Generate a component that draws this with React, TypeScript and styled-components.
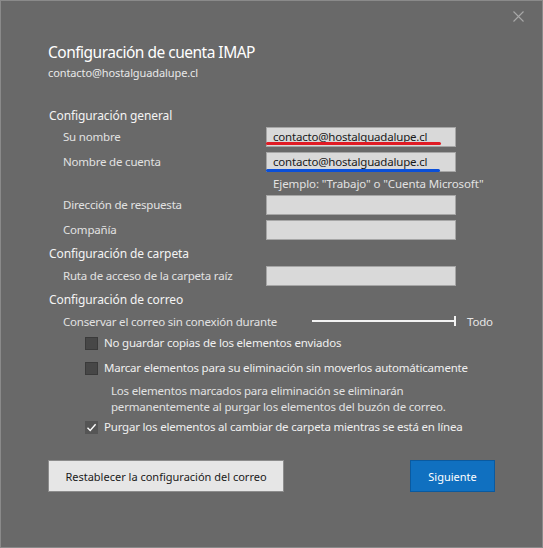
import React from "react";
import styled, { createGlobalStyle } from "styled-components";

const Global = createGlobalStyle`
  html, body { margin: 0; padding: 0; background: #696969; }
  * { box-sizing: border-box; }
`;

const FONT = `"Noto Sans", "Open Sans", "Liberation Sans", sans-serif`;

const Window = styled.div`
  width: 543px;
  height: 548px;
  background: #696969;
  border: 1px solid #8a8a8a;
  font-family: ${FONT};
  color: #e6e6e6;
  display: flex;
  flex-direction: column;
  overflow: hidden;
`;

const TopBar = styled.div`
  height: 32px;
  display: flex;
  justify-content: flex-end;
  align-items: flex-start;
  padding: 9px 18px 0 0;
`;

const CloseBtn = styled.button`
  width: 12px;
  height: 12px;
  padding: 0;
  border: 0;
  background: transparent;
  display: flex;
  align-items: center;
  justify-content: center;
`;

const Content = styled.div`
  padding-left: 47px;
  display: flex;
  flex-direction: column;
`;

const Title = styled.h1`
  margin: 7px 0 0 0;
  font-weight: 400;
  font-size: 15.5px;
  line-height: 24px;
  color: #ffffff;
  letter-spacing: -0.5px;
`;

const Subtitle = styled.div`
  margin-top: 1px;
  font-size: 11px;
  line-height: 16px;
  color: #e8e8e8;
  letter-spacing: -0.1px;
`;

const SectionHeader = styled.div<{ $mt: number }>`
  margin-top: ${(p) => p.$mt}px;
  font-size: 12px;
  line-height: 16px;
  color: #f4f4f4;
  padding-left: 1px;
  letter-spacing: -0.1px;
`;

const FieldRow = styled.div<{ $mt: number }>`
  margin-top: ${(p) => p.$mt}px;
  display: grid;
  grid-template-columns: 203px 190px;
  align-items: center;
  height: 20px;
  padding-left: 15px;
`;

const Label = styled.label`
  font-size: 11.5px;
  letter-spacing: -0.2px;
  color: #e2e2e2;
  white-space: nowrap;
  padding-bottom: 2px;
`;

const InputWrap = styled.div`
  position: relative;
  height: 20px;
`;

const TextInput = styled.div`
  width: 190px;
  height: 20px;
  background: #d9d9d9;
  border: 1px solid #a6a6a6;
  font-size: 11.5px;
  letter-spacing: -0.2px;
  line-height: 17px;
  color: #1a1a1a;
  padding-left: 6px;
  white-space: nowrap;
  overflow: hidden;
`;

const Underline = styled.div<{ $color: string; $w: number; $bottom: number }>`
  position: absolute;
  left: 0;
  bottom: ${(p) => p.$bottom}px;
  width: ${(p) => p.$w}px;
  height: 3px;
  border-radius: 2px;
  background: ${(p) => p.$color};
`;

const Hint = styled.div`
  margin-top: 4px;
  padding-left: 225px;
  font-size: 11.5px;
  letter-spacing: -0.1px;
  line-height: 16px;
  color: #e2e2e2;
  white-space: nowrap;
`;

const SliderRow = styled.div`
  margin-top: 5px;
  height: 16px;
  display: flex;
  align-items: center;
  padding-left: 15px;
`;

const SliderLabel = styled.span`
  width: 249px;
  font-size: 11.5px;
  letter-spacing: -0.2px;
  color: #e2e2e2;
  white-space: nowrap;
`;

const Track = styled.div`
  position: relative;
  width: 144px;
  height: 2px;
  background: #f2f2f2;
  &::after {
    content: "";
    position: absolute;
    right: 0;
    top: -4px;
    width: 2px;
    height: 10px;
    background: #f2f2f2;
  }
`;

const SliderValue = styled.span`
  margin-left: 11px;
  font-size: 11.5px;
  letter-spacing: -0.2px;
  color: #e6e6e6;
`;

const CheckRow = styled.div<{ $mt: number }>`
  margin-top: ${(p) => p.$mt}px;
  height: 20px;
  display: flex;
  align-items: center;
  padding-left: 37px;
  gap: 6px;
`;

const Box = styled.span<{ $checked?: boolean }>`
  width: 13px;
  height: 13px;
  flex: none;
  background: ${(p) => (p.$checked ? "#555555" : "#474747")};
  border: 1px solid ${(p) => (p.$checked ? "#555555" : "#3a3a3a")};
  display: flex;
  align-items: center;
  justify-content: center;
`;

const CheckText = styled.span`
  font-size: 11.5px;
  letter-spacing: -0.2px;
  color: #f0f0f0;
  white-space: nowrap;
  padding-bottom: 1px;
`;

const Note = styled.div`
  margin-top: 5px;
  padding-left: 63px;
  font-size: 11.5px;
  letter-spacing: -0.2px;
  line-height: 16px;
  color: #e2e2e2;
`;

const Buttons = styled.div`
  margin-top: 23px;
  display: flex;
  justify-content: space-between;
  padding-right: 47px;
`;

const SecondaryButton = styled.button`
  width: 236px;
  height: 32px;
  background: #e6e6e6;
  border: 1px solid #8c8c8c;
  font-family: ${FONT};
  font-size: 11px;
  color: #1a1a1a;
  padding: 0;
`;

const PrimaryButton = styled.button`
  width: 85px;
  height: 32px;
  background: #1070c0;
  border: 1px solid #0a5aa0;
  font-family: ${FONT};
  font-size: 11px;
  color: #ffffff;
  padding: 0;
`;

function Field({
  label,
  value,
  mt,
  underline,
}: {
  label: string;
  value?: string;
  mt: number;
  underline?: { color: string; w: number; bottom: number };
}) {
  return (
    <FieldRow $mt={mt}>
      <Label>{label}</Label>
      <InputWrap>
        <TextInput>{value}</TextInput>
        {underline && (
          <Underline $color={underline.color} $w={underline.w} $bottom={underline.bottom} />
        )}
      </InputWrap>
    </FieldRow>
  );
}

const Check = () => (
  <svg width="11" height="11" viewBox="0 0 11 11">
    <path d="M1.5 5.8 L4.2 8.4 L9.6 2.2" fill="none" stroke="#ffffff" strokeWidth="1.4" />
  </svg>
);

export default function App() {
  return (
    <>
      <Global />
      <Window>
        <TopBar>
          <CloseBtn aria-label="Cerrar">
            <svg width="11" height="11" viewBox="0 0 11 11">
              <path d="M0.5 0.5 L10.5 10.5 M10.5 0.5 L0.5 10.5" stroke="#a8a8a8" strokeWidth="1.1" />
            </svg>
          </CloseBtn>
        </TopBar>
        <Content>
          <Title>Configuración de cuenta IMAP</Title>
          <Subtitle>contacto@hostalguadalupe.cl</Subtitle>
          <SectionHeader $mt={27}>Configuración general</SectionHeader>
          <Field
            mt={3}
            label="Su nombre"
            value="contacto@hostalguadalupe.cl"
            underline={{ color: "#e01b24", w: 175, bottom: 2 }}
          />
          <Field
            mt={5}
            label="Nombre de cuenta"
            value="contacto@hostalguadalupe.cl"
            underline={{ color: "#0a4fd8", w: 174, bottom: 0 }}
          />
          <Hint>Ejemplo: "Trabajo" o "Cuenta Microsoft"</Hint>
          <Field mt={3} label="Dirección de respuesta" />
          <Field mt={5} label="Compañía" />
          <SectionHeader $mt={6}>Configuración de carpeta</SectionHeader>
          <Field mt={4} label="Ruta de acceso de la carpeta raíz" />
          <SectionHeader $mt={6}>Configuración de correo</SectionHeader>
          <SliderRow>
            <SliderLabel>Conservar el correo sin conexión durante</SliderLabel>
            <Track />
            <SliderValue>Todo</SliderValue>
          </SliderRow>
          <CheckRow $mt={4}>
            <Box />
            <CheckText>No guardar copias de los elementos enviados</CheckText>
          </CheckRow>
          <CheckRow $mt={5}>
            <Box />
            <CheckText>Marcar elementos para su eliminación sin moverlos automáticamente</CheckText>
          </CheckRow>
          <Note>
            Los elementos marcados para eliminación se eliminarán
            <br />
            permanentemente al purgar los elementos del buzón de correo.
          </Note>
          <CheckRow $mt={2}>
            <Box $checked>
              <Check />
            </Box>
            <CheckText>Purgar los elementos al cambiar de carpeta mientras se está en línea</CheckText>
          </CheckRow>
          <Buttons>
            <SecondaryButton>Restablecer la configuración del correo</SecondaryButton>
            <PrimaryButton>Siguiente</PrimaryButton>
          </Buttons>
        </Content>
      </Window>
    </>
  );
}
